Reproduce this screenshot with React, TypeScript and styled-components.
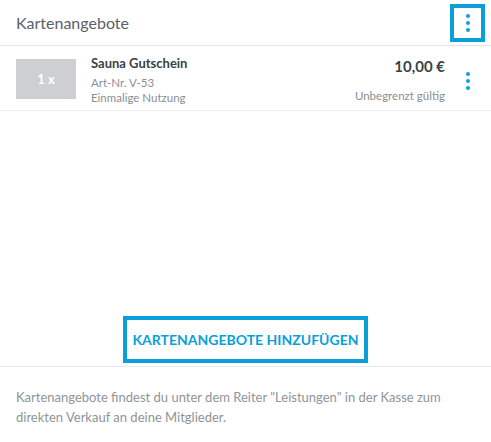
import React from "react";
import styled, { createGlobalStyle } from "styled-components";

const GlobalStyle = createGlobalStyle`
  html, body { margin: 0; padding: 0; background: #ffffff; }
  body { font-family: Lato, "Noto Sans", sans-serif; color: #3d4449; }
  * { box-sizing: border-box; }
`;

const BLUE = "#0a9fd8";

const Panel = styled.div`
  width: 491px;
  height: 442px;
  display: flex;
  flex-direction: column;
  background: #fff;
`;

const Header = styled.div`
  height: 46px;
  display: flex;
  align-items: center;
  justify-content: space-between;
  padding: 0 6px 0 16px;
  border-bottom: 1px solid #dfe6e9;
`;

const Title = styled.h2`
  margin: 0;
  font-size: 16px;
  font-weight: 400;
  color: #5a6166;
`;

const KebabButton = styled.button<{ $focused?: boolean; $shift?: number }>`
  width: 35px;
  height: 38px;
  padding: 0;
  margin-top: ${(p) => p.$shift || 0}px;
  background: transparent;
  border: 4px solid ${(p) => (p.$focused ? BLUE : "transparent")};
  display: flex;
  flex-direction: column;
  align-items: center;
  justify-content: center;
  gap: 3px;
  cursor: pointer;
`;

const Dot = styled.span`
  width: 4px;
  height: 4px;
  border-radius: 50%;
  background: ${BLUE};
`;

const Kebab = ({ focused, shift }: { focused?: boolean; shift?: number }) => (
  <KebabButton $focused={focused} $shift={shift} aria-label="Menü">
    <Dot />
    <Dot />
    <Dot />
  </KebabButton>
);

const Row = styled.div`
  height: 65px;
  display: flex;
  align-items: center;
  padding: 0 6px 0 16px;
  border-bottom: 1px solid #eceff1;
`;

const Thumb = styled.div`
  width: 60px;
  height: 40px;
  background: #cdcfd2;
  color: #fff;
  font-weight: 700;
  font-size: 13px;
  display: flex;
  align-items: center;
  justify-content: center;
  flex-shrink: 0;
  margin-top: 2px;
`;

const Info = styled.div`
  flex: 1;
  display: flex;
  flex-direction: column;
  margin-left: 15px;
  margin-top: 3px;
`;

const Name = styled.div`
  font-size: 13px;
  font-weight: 700;
  color: #3b4247;
  line-height: 18px;
  margin-bottom: 3px;
`;

const Meta = styled.div<{ $align?: string }>`
  font-size: 11.5px;
  color: #8a8f93;
  line-height: 15.5px;
  text-align: ${(p) => p.$align || "left"};
`;

const PriceCol = styled.div`
  display: flex;
  flex-direction: column;
  align-items: flex-end;
  margin-right: 5px;
  margin-top: 3px;
`;

const Price = styled.div`
  font-size: 15px;
  font-weight: 700;
  color: #3b4247;
  line-height: 20px;
  margin-bottom: 12px;
`;

const Spacer = styled.div`
  flex: 1;
  display: flex;
  align-items: flex-end;
  justify-content: center;
  padding-bottom: 3px;
`;

const AddButton = styled.button`
  height: 47px;
  padding: 0 6px;
  background: transparent;
  border: 4px solid ${BLUE};
  color: ${BLUE};
  font-family: inherit;
  font-size: 14px;
  font-weight: 700;
  cursor: pointer;
`;

const Footer = styled.div`
  border-top: 1px solid #e3eaec;
  padding: 20px 16px 18px;
  height: 76px;
  font-size: 13px;
  line-height: 20px;
  color: #8f9498;
`;

export default function App() {
  return (
    <>
      <GlobalStyle />
      <Panel>
        <Header>
          <Title>Kartenangebote</Title>
          <Kebab focused />
        </Header>
        <Row>
          <Thumb>1 x</Thumb>
          <Info>
            <Name>Sauna Gutschein</Name>
            <Meta>Art-Nr. V-53</Meta>
            <Meta>Einmalige Nutzung</Meta>
          </Info>
          <PriceCol>
            <Price>10,00 €</Price>
            <Meta $align="right">Unbegrenzt gültig</Meta>
          </PriceCol>
          <Kebab shift={5} />
        </Row>
        <Spacer>
          <AddButton>KARTENANGEBOTE HINZUFÜGEN</AddButton>
        </Spacer>
        <Footer>
          Kartenangebote findest du unter dem Reiter "Leistungen" in der Kasse zum
          direkten Verkauf an deine Mitglieder.
        </Footer>
      </Panel>
    </>
  );
}
